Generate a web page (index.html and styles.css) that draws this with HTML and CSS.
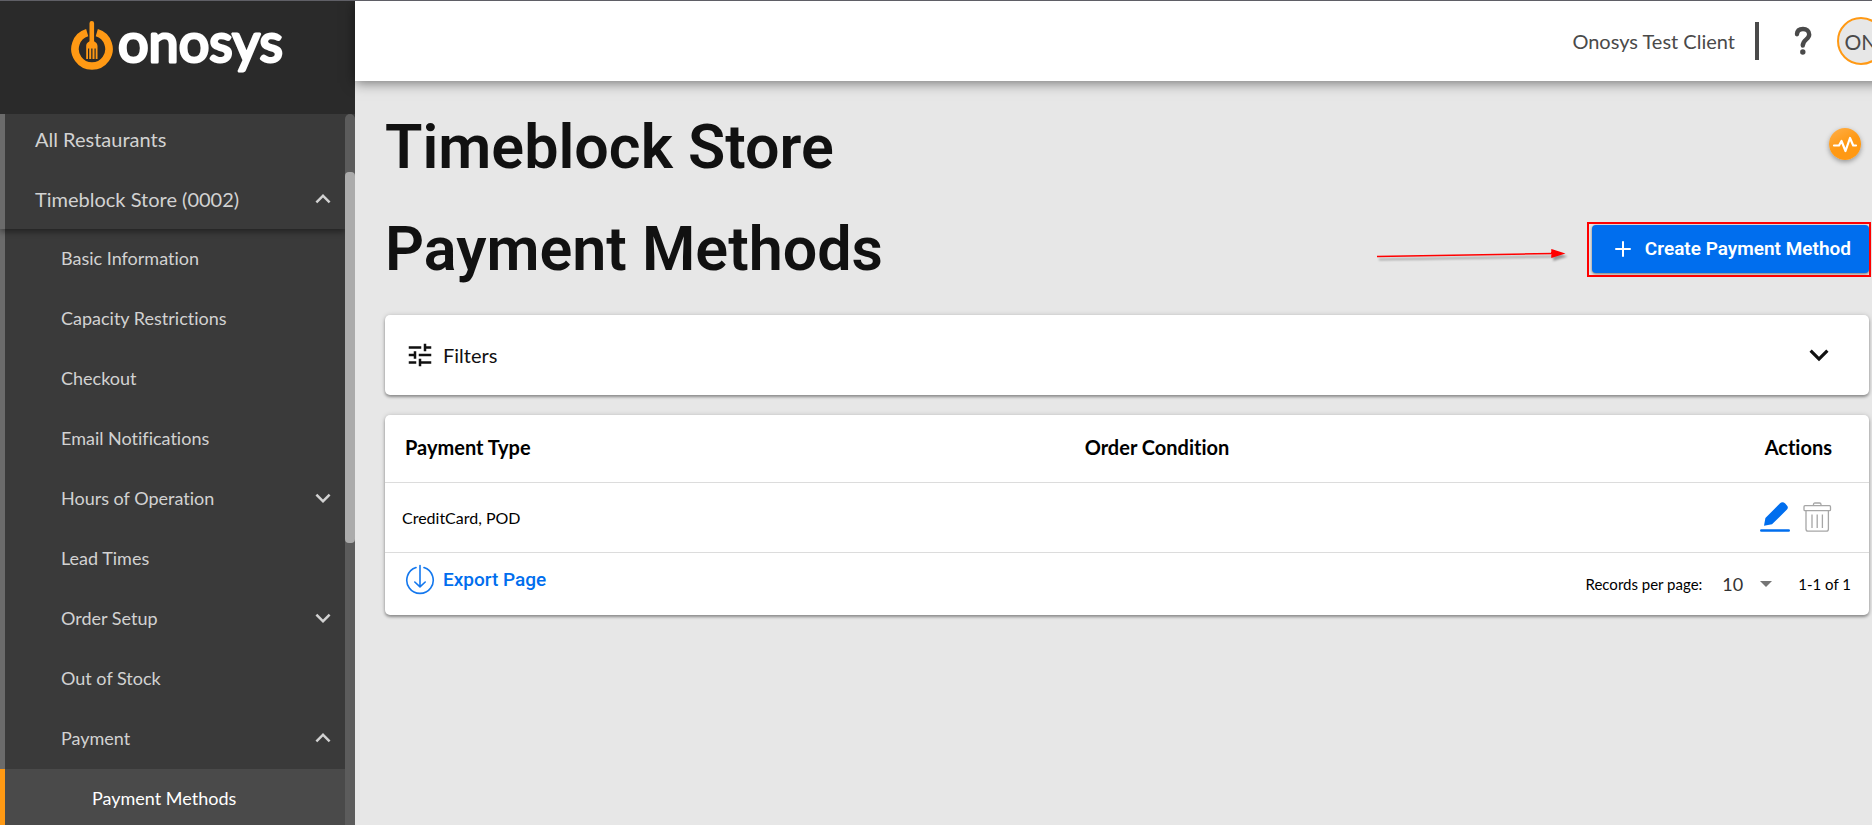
FILE: index.html
```html
<!DOCTYPE html>
<html lang="en">
<head>
<meta charset="utf-8">
<meta name="viewport" content="width=device-width, initial-scale=1">
<title>Payment Methods - Onosys</title>
<link rel="stylesheet" href="styles.css">
</head>
<body>
<svg class="defs" aria-hidden="true">
  <symbol id="down" viewBox="0 0 24 24"><path d="M16.59 8.59L12 13.17 7.41 8.59 6 10l6 6 6-6z"/></symbol>
  <symbol id="up" viewBox="0 0 24 24"><path d="M12 8l-6 6 1.41 1.41L12 10.83l4.59 4.58L18 14z"/></symbol>
</svg>
<div class="shell">
  <aside class="sidebar">
    <a class="logo" href="#">
      <svg class="logo-mark" viewBox="0 0 44 52" aria-hidden="true">
        <path d="M26.8 13.7A17 17 0 1 1 17.2 13.7" fill="none" stroke="#ff9914" stroke-width="7.6"/>
        <path d="M19.5 4.2a2.3 2.3 0 0 1 4.6 0V22c0 1 3.4 1.400 3.400 5v13h-1.800V29.500h-1.200V40h-2V29.500h-1.300V40h-2V29.500h-1.200V40h-1.800V27c0-3.600 3.300-4 3.300-5z" fill="#ff9914"/>
      </svg>
      <svg class="wordmark" viewBox="0 0 172 58"><text x="0" y="43">onosys</text></svg>
    </a>
    <div class="nav-wrap">
      <nav class="nav">
        <div class="nav-top">
          <a class="item first" href="#">All Restaurants</a>
          <a class="item" href="#">Timeblock Store (0002)<svg class="chev"><use href="#up"/></svg></a>
        </div>
        <a class="item sub" href="#">Basic Information</a>
        <a class="item sub" href="#">Capacity Restrictions</a>
        <a class="item sub" href="#">Checkout</a>
        <a class="item sub" href="#">Email Notifications</a>
        <a class="item sub" href="#">Hours of Operation<svg class="chev"><use href="#down"/></svg></a>
        <a class="item sub" href="#">Lead Times</a>
        <a class="item sub" href="#">Order Setup<svg class="chev"><use href="#down"/></svg></a>
        <a class="item sub" href="#">Out of Stock</a>
        <a class="item sub" href="#">Payment<svg class="chev"><use href="#up"/></svg></a>
        <a class="item leaf" href="#" aria-current="page">Payment Methods</a>
      </nav>
      <div class="track"><div class="thumb"></div></div>
    </div>
  </aside>
  <div class="page">
    <header class="topbar">
      <span class="client">Onosys Test Client</span>
      <span class="divider"></span>
      <button class="help" type="button" aria-label="Help">
        <svg viewBox="0 0 18 30" aria-hidden="true"><path d="M3 8.200C3.200 4.600 5.500 3 9 3s6.200 2 6.200 5.600c0 5-6.400 4.600-6.400 11" fill="none" stroke="#4a4a4a" stroke-width="4.400" stroke-linecap="round"/><circle cx="8.800" cy="26" r="2.700" fill="#4a4a4a"/></svg>
      </button>
      <button class="avatar" type="button">ON</button>
    </header>
    <main class="content">
      <div class="title-row">
        <h1 class="title">Timeblock Store</h1>
        <button class="pulse" type="button" aria-label="Status">
          <svg viewBox="0 0 32 32" aria-hidden="true"><path d="M5 17.500h5l2.500-4.500 4 10 4.500-13 3.200 7.500H27" fill="none" stroke="#fff" stroke-width="2.200" stroke-linecap="round" stroke-linejoin="round"/></svg>
        </button>
      </div>
      <div class="title-row">
        <h2 class="title">Payment Methods</h2>
        <div class="create-wrap">
          <svg class="arrow" viewBox="0 0 190 16" aria-hidden="true">
            <path d="M1 7.500L178 4.500M176 1L187 4.500L176 8z" fill="red" stroke="red" stroke-width="1.500"/>
          </svg>
          <button class="create" type="button">
            <svg viewBox="0 0 16 16" aria-hidden="true"><path d="M8 1v14M1 8h14" stroke="#fff" stroke-width="2" stroke-linecap="round"/></svg>
            Create Payment Method
          </button>
          <span class="highlight"></span>
        </div>
      </div>
      <button class="card filters" type="button">
        <svg class="tune" viewBox="0 0 24 24" aria-hidden="true"><path d="M3 17v2h6v-2H3zM3 5v2h10V5H3zm10 16v-2h8v-2h-8v-2h-2v6h2zM7 9v2H3v2h4v2h2V9H7zm14 4v-2H11v2h10zm-6-4h2V7h4V5h-4V3h-2v6z"/></svg>
        <span>Filters</span>
        <svg class="expand"><use href="#down"/></svg>
      </button>
      <section class="card">
        <table class="table">
          <thead>
            <tr><th class="type">Payment Type</th><th>Order Condition</th><th class="actions">Actions</th></tr>
          </thead>
          <tbody>
            <tr>
              <td>CreditCard, POD</td><td></td>
              <td class="actions">
                <div class="tools">
                  <button class="tool" type="button" aria-label="Edit">
                    <svg viewBox="0 0 30 30" aria-hidden="true"><path d="M4 23.700L5.400 16 19.800 1.600a4 4 0 0 1 5.400 0l1.300 1.300a3.600 3.600 0 0 1 0 5.200L12 22.300z" fill="#006eee"/><path d="M1.300 28.500h27.400" stroke="#006eee" stroke-width="2.600" stroke-linecap="round"/></svg>
                  </button>
                  <button class="tool" type="button" aria-label="Delete">
                    <svg viewBox="0 0 30 30" aria-hidden="true" fill="none" stroke="#a6a6a6" stroke-width="1.300"><rect x="2" y="3.700" width="26.500" height="5" rx="1"/><path d="M11.500 3.700V2.500Q11.500 1 13 1h4.500Q19 1 19 2.500v1.200M4 8.700V27q0 2.200 2.200 2.200h18Q26.400 29.200 26.400 27V8.700M10 12.500v13.500M15.200 12.500v13.500M20.400 12.500v13.500"/></svg>
                  </button>
                </div>
              </td>
            </tr>
          </tbody>
        </table>
        <div class="footer">
          <button class="export" type="button">
            <svg viewBox="0 0 30 32" aria-hidden="true" fill="none" stroke="#1478ee" stroke-width="1.600" stroke-linecap="round" stroke-linejoin="round"><path d="M11 3.600A13.200 13.200 0 1 0 19 3.600M15 1.500V22.500M9.800 18L15 22.800 20.200 18"/></svg>
            Export Page
          </button>
          <div class="pager">
            <label for="per-page">Records per page:</label>
            <span class="select-wrap">
              <select id="per-page" class="select"><option>10</option><option>25</option><option>50</option></select>
              <svg class="caret" viewBox="0 0 12 6" aria-hidden="true"><path d="M0 0h12L6 6z"/></svg>
            </span>
            <span>1-1 of 1</span>
          </div>
        </div>
      </section>
    </main>
  </div>
</div>
</body>
</html>
```
FILE: styles.css
```css
* { box-sizing: border-box; }
body {
  margin: 0;
  font-family: Lato, "Open Sans", sans-serif;
  font-variant-ligatures: none;
  color: #111;
  background: #e7e7e7;
}
button { font: inherit; color: inherit; border: 0; padding: 0; background: none; cursor: pointer; }
a { color: inherit; text-decoration: none; }
.defs { display: none; }
svg { display: block; flex: none; }

.shell {
  display: grid;
  grid-template-columns: 355px minmax(0, 1fr);
  height: 100vh;
  overflow: hidden;
  border-top: 1px solid #5f5f66;
}

.sidebar { display: flex; flex-direction: column; min-height: 0; background: #3a3a3a; }
.logo {
  display: flex;
  flex: none;
  gap: 4px;
  height: 113px;
  padding: 18px 0 0 70px;
  background: #2a2a2a;
  color: #fff;
}
.logo-mark { width: 44px; height: 52px; }
.wordmark {
  width: 172px;
  height: 58px;
  overflow: visible;
  fill: #fff;
  stroke: #fff;
  stroke-width: 3px;
  stroke-linejoin: round;
  font: 400 54px Lato, sans-serif;
}
.nav-wrap { display: flex; flex: 1; min-height: 0; }
.nav { flex: 1; overflow: hidden; color: #d2d2d2; }
.nav-top { position: relative; box-shadow: 0 3px 6px rgba(0, 0, 0, .4); }
.item {
  display: flex;
  align-items: center;
  justify-content: space-between;
  height: 60px;
  padding: 0 7px 0 30px;
  border-left: 5px solid #6b6b6b;
  font-size: 20px;
  background: #3a3a3a;
}
.first { height: 55px; padding-bottom: 5px; }
.sub { padding: 0 7px 2px 56px; font-size: 18px; }
.leaf { padding: 0 7px 2px 87px; font-size: 18px; color: #fff; background: #4a4a4a; border-left-color: #ff9914; }
.chev { width: 30px; height: 30px; fill: #d2d2d2; }
.track { width: 10px; padding-top: 58px; background: #5c5c5c; border-radius: 5px 5px 0 0; }
.thumb { height: 371px; border-radius: 4px; background: #ababab; }

.page { display: flex; flex-direction: column; min-width: 0; }
.topbar {
  position: relative;
  display: flex;
  flex: none;
  align-items: center;
  justify-content: flex-end;
  height: 80px;
  margin-right: -13px;
  background: #fff;
  color: #4a4a4a;
  font-size: 20px;
  box-shadow: 0 2px 12px rgba(0, 0, 0, .5);
}
.divider { width: 4px; height: 38px; margin: 0 35px 0 20px; background: #4a4a4a; }
.help { width: 18px; margin-right: 25px; }
.avatar {
  width: 48px;
  height: 48px;
  border: 2px solid #ff9914;
  border-radius: 50%;
  background: #e7e7e7;
  font-size: 21px;
}

.content { padding: 15px 3px 0 30px; }
.title-row { display: flex; align-items: center; justify-content: space-between; height: 102px; }
.title { margin: 0; font: 600 61px/70px Roboto, sans-serif; }
.pulse {
  width: 32px;
  height: 32px;
  margin: 0 8px 6px 0;
  border-radius: 50%;
  background: linear-gradient(150deg, #ffb04a, #ff9914 50%);
  box-shadow: 0 2px 5px rgba(0, 0, 0, .35);
}
.create-wrap { position: relative; }
.create {
  display: flex;
  align-items: center;
  gap: 14px;
  height: 48px;
  padding: 0 18px 0 23px;
  border-radius: 4px;
  background: #006eee;
  color: #fff;
  font: 600 19px/24px Roboto, sans-serif;
  box-shadow: 0 1px 3px rgba(0, 0, 0, .5);
}
.create svg { width: 16px; height: 16px; }
.highlight { position: absolute; inset: -3px -2px -4px -5px; border: 2px solid red; pointer-events: none; }
.arrow {
  position: absolute;
  right: calc(100% + 26px);
  top: 24px;
  width: 190px;
  height: 16px;
  overflow: visible;
  filter: drop-shadow(2px 3px 1px rgba(0, 0, 0, .35));
}

.card {
  width: 100%;
  background: #fff;
  border-radius: 5px;
  box-shadow: 0 2px 3px rgba(0, 0, 0, .35), 0 0 5px rgba(0, 0, 0, .15);
}
.filters {
  display: flex;
  align-items: center;
  height: 80px;
  margin: 15px 0 20px;
  padding: 0 31px 0 20px;
  font-size: 20px;
}
.tune { width: 30px; height: 30px; margin-right: 8px; fill: #111; }
.expand { width: 38px; height: 38px; margin-left: auto; fill: #111; }

.table { width: 100%; border-collapse: collapse; table-layout: fixed; text-align: left; color: #000; }
.table tr { border-bottom: 1px solid #dcdcdc; }
.table th { height: 67px; padding: 0 20px 2px; font-size: 20px; font-weight: 700; }
.table td { height: 70px; padding: 0 17px; font-size: 16px; }
.table .type { width: 45.8%; }
.table .actions { padding-right: 37px; text-align: right; }
.tools { display: flex; justify-content: flex-end; gap: 12px; }
.tool, .tool svg { width: 30px; height: 30px; }

.footer { display: flex; align-items: center; justify-content: space-between; height: 62px; padding: 0 18px 0 20px; }
.export {
  display: flex;
  align-items: center;
  gap: 8px;
  padding-bottom: 8px;
  color: #006eee;
  font: 500 19px/24px Roboto, sans-serif;
}
.export svg { width: 30px; height: 32px; }
.pager { display: flex; align-items: center; gap: 20px; font-size: 15px; color: #000; }
.select-wrap { position: relative; display: block; }
.select {
  display: block;
  width: 56px;
  height: 32px;
  padding: 0;
  border: 0;
  appearance: none;
  background: none;
  color: #333;
  font: 18px/32px Lato, sans-serif;
}
.caret { position: absolute; right: 6px; top: 13px; width: 12px; height: 6px; fill: #757575; pointer-events: none; }
```
